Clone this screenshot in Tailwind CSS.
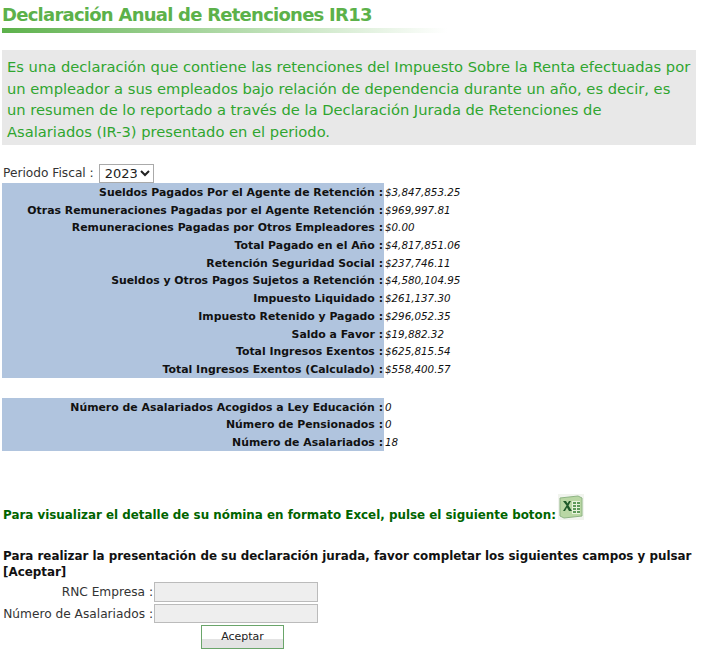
<!DOCTYPE html>
<html lang="es">

<head>
    <meta charset="UTF-8">
    <meta name="viewport" content="width=device-width, initial-scale=1.0">
    <script src="https://cdn.jsdelivr.net/npm/@tailwindcss/browser@4"></script>
    <title>Declaración Anual de Retenciones IR13</title>
</head>

<body class="bg-white text-[#333] text-[12.2px] font-['DejaVu_Sans',sans-serif] w-[702px] h-[655px] overflow-hidden">
    <div class="pl-[2px] pt-[4px]">
        <h1 class="text-[18px] tracking-[-0.75px] leading-[22px] font-bold text-[#5cb14a]">Declaración Anual de Retenciones IR13</h1>
        <div class="h-[5px] mt-[2px] w-[445px] bg-gradient-to-r from-[#5cb14a] to-white"></div>
    </div>

    <div class="mt-[17px] mx-[2px] w-[694px] h-[95px] bg-[#e8e8e8] px-[5px] pt-[6px] text-[14.7px] leading-[21.5px] text-[#2fa52f]">
        Es una declaración que contiene las retenciones del Impuesto Sobre la Renta efectuadas por un empleador a sus empleados bajo relación de dependencia durante un año, es decir, es un resumen de lo reportado a través de la Declaración Jurada de Retenciones de<br>Asalariados (IR-3) presentado en el periodo.
    </div>

    <div class="mt-[18px] pl-[3px] h-[20px] flex items-center gap-[5px]">
        <span>Periodo Fiscal :</span>
        <select class="h-[19px] w-[55px] border border-[#aaa] bg-white text-[#222] text-[13px] pl-[1px]">
            <option>2023</option>
        </select>
    </div>

    <div class="ml-[2px] grid grid-cols-[382px_auto] justify-start auto-rows-[17.7px] leading-[17.7px]">
        <div class="bg-[#b0c4de] text-right text-[10.9px] pt-px font-bold text-[#111] pr-[1px]">Sueldos Pagados Por el Agente de Retención :</div><div class="italic text-[10.3px] pt-px text-[#111] pl-[1px]">$3,847,853.25</div>
        <div class="bg-[#b0c4de] text-right text-[10.9px] pt-px font-bold text-[#111] pr-[1px]">Otras Remuneraciones Pagadas por el Agente Retención :</div><div class="italic text-[10.3px] pt-px text-[#111] pl-[1px]">$969,997.81</div>
        <div class="bg-[#b0c4de] text-right text-[10.9px] pt-px font-bold text-[#111] pr-[1px]">Remuneraciones Pagadas por Otros Empleadores :</div><div class="italic text-[10.3px] pt-px text-[#111] pl-[1px]">$0.00</div>
        <div class="bg-[#b0c4de] text-right text-[10.9px] pt-px font-bold text-[#111] pr-[1px]">Total Pagado en el Año :</div><div class="italic text-[10.3px] pt-px text-[#111] pl-[1px]">$4,817,851.06</div>
        <div class="bg-[#b0c4de] text-right text-[10.9px] pt-px font-bold text-[#111] pr-[1px]">Retención Seguridad Social :</div><div class="italic text-[10.3px] pt-px text-[#111] pl-[1px]">$237,746.11</div>
        <div class="bg-[#b0c4de] text-right text-[10.9px] pt-px font-bold text-[#111] pr-[1px]">Sueldos y Otros Pagos Sujetos a Retención :</div><div class="italic text-[10.3px] pt-px text-[#111] pl-[1px]">$4,580,104.95</div>
        <div class="bg-[#b0c4de] text-right text-[10.9px] pt-px font-bold text-[#111] pr-[1px]">Impuesto Liquidado :</div><div class="italic text-[10.3px] pt-px text-[#111] pl-[1px]">$261,137.30</div>
        <div class="bg-[#b0c4de] text-right text-[10.9px] pt-px font-bold text-[#111] pr-[1px]">Impuesto Retenido y Pagado :</div><div class="italic text-[10.3px] pt-px text-[#111] pl-[1px]">$296,052.35</div>
        <div class="bg-[#b0c4de] text-right text-[10.9px] pt-px font-bold text-[#111] pr-[1px]">Saldo a Favor :</div><div class="italic text-[10.3px] pt-px text-[#111] pl-[1px]">$19,882.32</div>
        <div class="bg-[#b0c4de] text-right text-[10.9px] pt-px font-bold text-[#111] pr-[1px]">Total Ingresos Exentos :</div><div class="italic text-[10.3px] pt-px text-[#111] pl-[1px]">$625,815.54</div>
        <div class="bg-[#b0c4de] text-right text-[10.9px] pt-px font-bold text-[#111] pr-[1px]">Total Ingresos Exentos (Calculado) :</div><div class="italic text-[10.3px] pt-px text-[#111] pl-[1px]">$558,400.57</div>
    </div>

    <div class="mt-[20px] ml-[2px] grid grid-cols-[382px_auto] justify-start auto-rows-[17.7px] leading-[17.7px]">
        <div class="bg-[#b0c4de] text-right text-[10.9px] pt-px font-bold text-[#111] pr-[1px]">Número de Asalariados Acogidos a Ley Educación :</div><div class="italic text-[10.3px] pt-px text-[#111] pl-[1px]">0</div>
        <div class="bg-[#b0c4de] text-right text-[10.9px] pt-px font-bold text-[#111] pr-[1px]">Número de Pensionados :</div><div class="italic text-[10.3px] pt-px text-[#111] pl-[1px]">0</div>
        <div class="bg-[#b0c4de] text-right text-[10.9px] pt-px font-bold text-[#111] pr-[1px]">Número de Asalariados :</div><div class="italic text-[10.3px] pt-px text-[#111] pl-[1px]">18</div>
    </div>

    <div class="mt-[42px] pl-[3px] flex items-end h-[31px]">
        <span class="font-bold text-[11.9px] text-[#006400] leading-[18px]">Para visualizar el detalle de su nómina en formato Excel, pulse el siguiente boton:</span>
        <svg width="28" height="28" viewBox="0 0 28 28" class="ml-px self-start">
            <rect x="1" y="1" width="26" height="26" fill="#f1f4ee"/>
            <path d="M3 5 21 3 25 5V23L7 25 3 23z" fill="#b9d7a4" stroke="#8fb585"/>
            <path d="M15 8h8v13h-8z" fill="#e8f2dd"/>
            <path d="M16 9h3v2h-3zM20 9h3v2h-3zM16 12h3v2h-3zM20 12h3v2h-3zM16 15h3v2h-3zM20 15h3v2h-3zM16 18h3v2h-3zM20 18h3v2h-3z" fill="#5f9a5a"/>
            <path d="M6 8h3l1.500 2.500 1.500-2.500h2l-2.500 4.500 3.500 5.500h-3l-2-3.500-2 3.500H6l3.500-5.500z" fill="#1f5a2a"/>
        </svg>
    </div>

    <div class="mt-[24px] pl-[3px] font-bold text-[11.9px] text-[#111] leading-[16px]">Para realizar la presentación de su declaración jurada, favor completar los siguientes campos y pulsar [Aceptar]</div>

    <div class="mt-[2px] grid grid-cols-[151px_164px] gap-x-[1px] gap-y-[2px] pl-[2px] items-center">
        <label class="text-right pt-px">RNC Empresa :</label>
        <input type="text" class="h-[20px] bg-[#eee] border border-[#bbb]">
        <label class="text-right pt-px">Número de Asalariados :</label>
        <input type="text" class="h-[19px] bg-[#eee] border border-[#bbb]">
    </div>

    <div class="mt-[2px] ml-[201px]">
        <button class="w-[83px] h-[24px] border border-[#6aa56a] text-[#222] text-[11px] bg-gradient-to-b from-white from-60% to-[#e3e3e3] to-60%">Aceptar</button>
    </div>
</body>

</html>
